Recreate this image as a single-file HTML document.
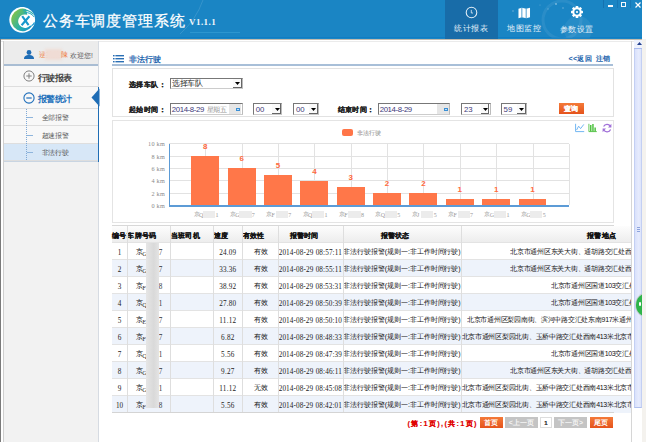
<!DOCTYPE html><html><head><meta charset="utf-8"><style>
*{margin:0;padding:0;box-sizing:border-box}
html,body{width:646px;height:442px;overflow:hidden;background:#fff;font-family:"Liberation Sans",sans-serif}
.a{position:absolute;white-space:nowrap}
</style></head><body><div class="a" style="left:0px;top:0px;width:642px;height:38.5px;background:#1a85c4"></div>
<div class="a" style="left:0px;top:37.2px;width:642px;height:1.3px;background:#0f7dc4"></div>
<div class="a" style="left:0px;top:38.5px;width:642px;height:1px;background:#c4bcae"></div>
<svg class="a" style="left:0;top:0" width="642" height="38" viewBox="0 0 642 38"><path d="M203 0Q196 20 180 34" fill="none" stroke="rgba(255,255,255,0.12)" stroke-width="1"/><path d="M190 32.5H240" stroke="rgba(120,220,255,0.25)" stroke-width="0.8"/><circle cx="562" cy="20" r="19" fill="none" stroke="rgba(255,255,255,0.07)" stroke-width="3"/><circle cx="578" cy="30" r="14" fill="rgba(255,255,255,0.06)"/><circle cx="556" cy="4" r="1" fill="rgba(255,255,255,0.4)"/><circle cx="563" cy="8" r="0.8" fill="rgba(255,255,255,0.35)"/><circle cx="548" cy="9" r="0.7" fill="rgba(255,255,255,0.3)"/><circle cx="513" cy="11" r="0.8" fill="rgba(255,255,255,0.35)"/><circle cx="540" cy="5" r="0.6" fill="rgba(255,255,255,0.3)"/></svg>
<div class="a" style="left:445px;top:0px;width:52.5px;height:38.5px;background:#186ca8"></div>
<div class="a" id="j1" style="left:42.8px;top:12px;width:142.8px;text-align:justify;text-align-last:justify;letter-spacing:0.847px;height:18px;line-height:18px;font-size:15.4px;color:#fff;-webkit-text-stroke:0.25px #fff">公务车调度管理系统</div>
<div class="a" style="left:189px;top:17.2px;height:11px;line-height:11px;font-size:9px;color:#f0f6fb;font-family:'Liberation Serif',serif;font-weight:bold;letter-spacing:0.45px">V1.1.1</div>
<svg class="a" style="left:9px;top:7px" width="27" height="27" viewBox="0 0 27 27">
<defs><linearGradient id="lg" x1="0" y1="0.2" x2="1" y2="0.9"><stop offset="0" stop-color="#8cc63f"/><stop offset="0.55" stop-color="#2bb0a6"/><stop offset="1" stop-color="#1592d0"/></linearGradient></defs>
<circle cx="13.2" cy="12.8" r="12.9" fill="#fff"/>
<path d="M17.06 2.18A11.3 11.3 0 1 0 22.9 19.3L21.2 18.57A6.8 6.8 0 1 1 18.33 7.81Z" fill="url(#lg)"/>
<path d="M14 3.2Q20 2.5 24.5 7.5" fill="none" stroke="#2ab0b0" stroke-width="1.1"/>
<path d="M15.5 5.6Q21.5 5 25.2 10" fill="none" stroke="#22a6c0" stroke-width="1"/>
<path d="M22.5 18.8Q24.5 17.5 25.5 15.5" fill="none" stroke="#1a9ad0" stroke-width="1.2"/>
<path d="M13.2 9.2L19.6 18.2M20.4 9.2L12.6 18.2" stroke="#1898cc" stroke-width="2.1" stroke-linecap="butt"/>
</svg>
<div class="a" id="j2" style="left:454.3px;top:24.2px;width:34px;text-align:justify;text-align-last:justify;letter-spacing:0.480px;height:10px;line-height:10px;font-size:8.2px;color:#e8f2fa;">统计报表</div>
<div class="a" id="j3" style="left:507.0px;top:24px;width:34px;text-align:justify;text-align-last:justify;letter-spacing:0.480px;height:10px;line-height:10px;font-size:8.2px;color:#e8f2fa;">地图监控</div>
<div class="a" id="j4" style="left:560.1px;top:24.8px;width:33.5px;text-align:justify;text-align-last:justify;letter-spacing:0.355px;height:10px;line-height:10px;font-size:8.2px;color:#e8f2fa;">参数设置</div>
<svg class="a" style="left:465px;top:5.5px" width="13" height="13" viewBox="0 0 13 13"><circle cx="6.5" cy="6.5" r="5.3" fill="none" stroke="#e6f0f8" stroke-width="1.05"/><path d="M6.3 3.9V7H8" fill="none" stroke="#e6f0f8" stroke-width="0.8"/></svg>
<svg class="a" style="left:518.3px;top:6.5px" width="12.5" height="12" viewBox="0 0 13 12"><path d="M0.5 1.5L4 0.5L8.5 1.5L12.5 0.5V10.5L8.5 11.5L4 10.5L0.5 11.5Z" fill="#fff"/><path d="M4 0.8V10.5M8.5 1.5V11.3" stroke="#1a80c3" stroke-width="0.8"/></svg>
<svg class="a" style="left:570.2px;top:5.2px" width="14" height="14" viewBox="0 0 14 14"><g transform="translate(7 7)" fill="#fff"><circle r="4.7"/><rect x="-1.3" y="-6" width="2.6" height="2.6" rx="0.6" transform="rotate(0)"/><rect x="-1.3" y="-6" width="2.6" height="2.6" rx="0.6" transform="rotate(45)"/><rect x="-1.3" y="-6" width="2.6" height="2.6" rx="0.6" transform="rotate(90)"/><rect x="-1.3" y="-6" width="2.6" height="2.6" rx="0.6" transform="rotate(135)"/><rect x="-1.3" y="-6" width="2.6" height="2.6" rx="0.6" transform="rotate(180)"/><rect x="-1.3" y="-6" width="2.6" height="2.6" rx="0.6" transform="rotate(225)"/><rect x="-1.3" y="-6" width="2.6" height="2.6" rx="0.6" transform="rotate(270)"/><rect x="-1.3" y="-6" width="2.6" height="2.6" rx="0.6" transform="rotate(315)"/><circle r="2.7" fill="#1a85c4"/><circle r="1.1" fill="#fff"/></g></svg>
<div class="a" style="left:603px;top:0px;width:0.9px;height:7.5px;background:#1572b0"></div>
<div class="a" style="left:617px;top:0px;width:0.9px;height:7.5px;background:#1677b6"></div>
<div class="a" style="left:629.5px;top:0px;width:0.9px;height:7.5px;background:#1677b6"></div>
<div class="a" style="left:608.2px;top:5.4px;width:5px;height:1.2px;background:#f4f8fc"></div>
<div class="a" style="left:621px;top:2.3px;width:5px;height:4.3px;border:1px solid #f4f8fc;border-top-width:1.6px"></div>
<svg class="a" style="left:634.8px;top:1.8px" width="6" height="6" viewBox="0 0 6 6"><path d="M0.5 0.5L5.5 5.5M5.5 0.5L0.5 5.5" stroke="#fff" stroke-width="1.2"/></svg>
<div class="a" style="left:0px;top:40.8px;width:646px;height:1.6px;background:#ebebeb"></div>
<div class="a" style="left:0px;top:38.5px;width:1.2px;height:404px;background:#7a7a7a"></div>
<div class="a" style="left:3px;top:41px;width:96px;height:401px;background:#f2f2f2;border-left:1px solid #cfcfcf;border-right:1px solid #d6dbe2"></div>
<div class="a" style="left:4px;top:41px;width:94px;height:23px;background:#ececec"></div>
<div class="a" style="left:4px;top:64px;width:94px;height:1.6px;background:#a9bdd3"></div>
<svg class="a" style="left:24px;top:49.5px" width="10" height="9" viewBox="0 0 10 9"><circle cx="5" cy="2.5" r="2.4" fill="#1f6db5"/><path d="M0 9C0 6 2 5 5 5C8 5 10 6 10 9Z" fill="#1f6db5"/></svg>
<div class="a" style="left:38.5px;top:50px;height:9px;line-height:9px;font-size:6.7px;color:#f07a3a;">逯某某</div>
<div class="a" style="left:45px;top:49px;width:17px;height:11px;background:#f0dcd5;filter:blur(1.5px)"></div>
<div class="a" style="left:60.5px;top:50px;height:9px;line-height:9px;font-size:6.7px;color:#f07a3a;">陳</div>
<div class="a" id="j5" style="left:70.2px;top:50.5px;width:22.6px;text-align:justify;text-align-last:justify;letter-spacing:-0.093px;height:9px;line-height:9px;font-size:6.8px;color:#5a5a5a;">欢迎您!</div>
<div class="a" style="left:4px;top:65.6px;width:94px;height:21px;background:#f8f8f8;border-bottom:1px solid #dedede"></div>
<svg class="a" style="left:23.25px;top:70.4px" width="12" height="12" viewBox="0 0 12 12"><circle cx="6" cy="6" r="5.1" fill="none" stroke="#808080" stroke-width="1"/><path d="M6 3.3V8.7M3.3 6H8.7" stroke="#808080" stroke-width="1"/></svg>
<div class="a" id="j6" style="left:37.7px;top:73px;width:34px;text-align:justify;text-align-last:justify;letter-spacing:-0.520px;height:10px;line-height:10px;font-size:8.6px;color:#444;font-weight:bold;-webkit-text-stroke:0">行驶报表</div>
<div class="a" style="left:4px;top:86.6px;width:94px;height:22px;background:#f8f8f8;border-bottom:1px solid #dedede"></div>
<svg class="a" style="left:23.25px;top:91.75px" width="12" height="12" viewBox="0 0 12 12"><circle cx="6" cy="6" r="5.1" fill="none" stroke="#2170bb" stroke-width="1.1"/><path d="M3.3 6H8.7" stroke="#2170bb" stroke-width="1.2"/></svg>
<div class="a" id="j7" style="left:37.7px;top:94.3px;width:34px;text-align:justify;text-align-last:justify;letter-spacing:-0.520px;height:10px;line-height:10px;font-size:8.6px;color:#2170bb;font-weight:bold;-webkit-text-stroke:0">报警统计</div>
<svg class="a" style="left:90.5px;top:87.5px" width="9" height="19" viewBox="0 0 9 19"><path d="M0.5 9.5L8.5 0.5V18.5Z" fill="#1f6db5"/></svg>
<div class="a" style="left:4px;top:108.6px;width:94px;height:17.7px;background:#f8f8f8;border-bottom:1px solid #dedede"></div>
<div class="a" style="left:27px;top:117.1px;width:6px;height:0.9px;background:#8fb5dc"></div>
<div class="a" id="j8" style="left:41.5px;top:113.1px;width:27.7px;text-align:justify;text-align-last:justify;letter-spacing:-0.095px;height:9px;line-height:9px;font-size:6.8px;color:#555;">全部报警</div>
<div class="a" style="left:4px;top:126.3px;width:94px;height:17.7px;background:#f8f8f8;border-bottom:1px solid #dedede"></div>
<div class="a" style="left:27px;top:134.8px;width:6px;height:0.9px;background:#8fb5dc"></div>
<div class="a" id="j9" style="left:41.5px;top:130.8px;width:27.7px;text-align:justify;text-align-last:justify;letter-spacing:-0.095px;height:9px;line-height:9px;font-size:6.8px;color:#555;">超速报警</div>
<div class="a" style="left:4px;top:143.6px;width:94px;height:17.7px;background:#d7e7f7;border-bottom:1px solid #dedede"></div>
<div class="a" style="left:27px;top:152.1px;width:6px;height:0.9px;background:#8fb5dc"></div>
<div class="a" id="j10" style="left:41.5px;top:148.1px;width:27.7px;text-align:justify;text-align-last:justify;letter-spacing:-0.095px;height:9px;line-height:9px;font-size:6.8px;color:#555;">非法行驶</div>
<div class="a" style="left:26.3px;top:108.6px;width:0.9px;height:52.7px;background:repeating-linear-gradient(#7fa9d6 0 1px,transparent 1px 2px)"></div>
<div class="a" style="left:98px;top:87px;width:1px;height:74.5px;background:#1f6db5"></div>
<div class="a" style="left:4px;top:160.8px;width:94px;height:1.2px;background:#c9d5e2"></div>
<svg class="a" style="left:112.5px;top:54.5px" width="11" height="8" viewBox="0 0 11 8"><g fill="#2a6fb5"><rect x="0" y="0" width="1.6" height="1.4"/><rect x="2.4" y="0" width="8.6" height="1.4"/><rect x="0" y="3" width="1.6" height="1.4"/><rect x="2.4" y="3" width="8.6" height="1.4"/><rect x="0" y="6" width="1.6" height="1.4"/><rect x="2.4" y="6" width="8.6" height="1.4"/></g></svg>
<div class="a" id="j11" style="left:128.6px;top:54.8px;width:32px;text-align:justify;text-align-last:justify;letter-spacing:-0.020px;height:9px;line-height:9px;font-size:7.8px;color:#2364ad;font-weight:bold;-webkit-text-stroke:0">非法行驶</div>
<div class="a" id="j12" style="left:568.6px;top:54.2px;width:41.8px;text-align:justify;text-align-last:justify;letter-spacing:0.156px;height:9px;line-height:9px;font-size:7.2px;color:#2364ad;font-weight:bold;-webkit-text-stroke:0">&lt;&lt;返回&nbsp;&nbsp;注销</div>
<div class="a" style="left:112px;top:64.3px;width:501px;height:1.7px;background:#a8bfd8"></div>
<div class="a" style="left:112px;top:68.3px;width:502px;height:48.4px;border:1px solid #e2e2e2"></div>
<div class="a" id="j13" style="left:129px;top:80px;width:37px;text-align:justify;text-align-last:justify;letter-spacing:0.380px;height:9px;line-height:9px;font-size:7.4px;color:#222;font-weight:bold;-webkit-text-stroke:0.15px #222">选择车队：</div>
<div class="a" style="left:170.2px;top:77.6px;width:72.6px;height:11.2px;background:#fff;border-top:1px solid #777;border-left:1px solid #777;border-right:1px solid #bbb;border-bottom:1px solid #ccc"></div>
<div class="a" id="j14" style="left:172px;top:78.6px;width:30.5px;text-align:justify;text-align-last:justify;letter-spacing:-0.395px;height:9.5px;line-height:9.5px;font-size:7.5px;color:#222;">选择车队</div>
<div class="a" style="left:232.9px;top:79.2px;width:9.2px;height:8.6px;background:#fafafa;border-right:1.2px solid #666;border-bottom:1.5px solid #666"></div>
<svg class="a" style="left:235.3px;top:82.4px" width="5" height="3" viewBox="0 0 5 3"><path d="M0 0H5L2.5 3Z" fill="#000"/></svg>
<div class="a" id="j15" style="left:129px;top:104.5px;width:37px;text-align:justify;text-align-last:justify;letter-spacing:0.380px;height:9px;line-height:9px;font-size:7.4px;color:#222;font-weight:bold;-webkit-text-stroke:0.15px #222">起始时间：</div>
<div class="a" style="left:170.2px;top:103.1px;width:72.7px;height:11.5px;background:#fff;border-top:1px solid #777;border-left:1px solid #777;border-right:1px solid #bbb;border-bottom:1px solid #ccc"></div>
<div class="a" id="j16" style="left:171.79999999999998px;top:105.0px;width:32.3px;text-align:justify;text-align-last:justify;letter-spacing:-0.381px;height:9.5px;line-height:9.5px;font-size:7.8px;color:#3e3a7a;">2014-8-29</div>
<div class="a" id="j17" style="left:206.79999999999998px;top:104.69999999999999px;width:19.5px;text-align:justify;text-align-last:justify;letter-spacing:-0.520px;height:9.5px;line-height:9.5px;font-size:7px;color:#999;">星期五</div>
<div class="a" style="left:229.2px;top:104.3px;width:11.8px;height:9.3px;background:#e6e6e6"></div>
<div class="a" style="left:236.2px;top:107.5px;width:4px;height:3.6px;border:1px solid #3b8fd4;background:#bfe0fa"></div>
<div class="a" style="left:253.1px;top:103.1px;width:29.1px;height:11.5px;background:#fff;border-top:1px solid #777;border-left:1px solid #777;border-right:1px solid #bbb;border-bottom:1px solid #ccc"></div>
<div class="a" style="left:255.7px;top:105.0px;height:9.5px;line-height:9.5px;font-size:7.8px;color:#3e3a7a;">00</div>
<div class="a" style="left:272.2px;top:104.3px;width:8.8px;height:9.3px;background:#fafafa;border-right:1.2px solid #666;border-bottom:1.5px solid #666"></div>
<svg class="a" style="left:274.59999999999997px;top:108.1px" width="5" height="3" viewBox="0 0 5 3"><path d="M0 0H5L2.5 3Z" fill="#000"/></svg>
<div class="a" style="left:293.3px;top:103.1px;width:25.5px;height:11.5px;background:#fff;border-top:1px solid #777;border-left:1px solid #777;border-right:1px solid #bbb;border-bottom:1px solid #ccc"></div>
<div class="a" style="left:295.90000000000003px;top:105.0px;height:9.5px;line-height:9.5px;font-size:7.8px;color:#3e3a7a;">00</div>
<div class="a" style="left:308.8px;top:104.3px;width:8.8px;height:9.3px;background:#fafafa;border-right:1.2px solid #666;border-bottom:1.5px solid #666"></div>
<svg class="a" style="left:311.2px;top:108.1px" width="5" height="3" viewBox="0 0 5 3"><path d="M0 0H5L2.5 3Z" fill="#000"/></svg>
<div class="a" id="j18" style="left:337.5px;top:104.5px;width:37px;text-align:justify;text-align-last:justify;letter-spacing:0.380px;height:9px;line-height:9px;font-size:7.4px;color:#222;font-weight:bold;-webkit-text-stroke:0.15px #222">结束时间：</div>
<div class="a" style="left:378.1px;top:103.1px;width:72.4px;height:11.5px;background:#fff;border-top:1px solid #777;border-left:1px solid #777;border-right:1px solid #bbb;border-bottom:1px solid #ccc"></div>
<div class="a" id="j19" style="left:379.70000000000005px;top:105.0px;width:32.3px;text-align:justify;text-align-last:justify;letter-spacing:-0.381px;height:9.5px;line-height:9.5px;font-size:7.8px;color:#3e3a7a;">2014-8-29</div>
<div class="a" style="left:437.1px;top:104.3px;width:11.8px;height:9.3px;background:#e6e6e6"></div>
<div class="a" style="left:444.1px;top:107.5px;width:4px;height:3.6px;border:1px solid #3b8fd4;background:#bfe0fa"></div>
<div class="a" style="left:461.3px;top:103.1px;width:29.4px;height:11.5px;background:#fff;border-top:1px solid #777;border-left:1px solid #777;border-right:1px solid #bbb;border-bottom:1px solid #ccc"></div>
<div class="a" style="left:463.90000000000003px;top:105.0px;height:9.5px;line-height:9.5px;font-size:7.8px;color:#3e3a7a;">23</div>
<div class="a" style="left:480.7px;top:104.3px;width:8.8px;height:9.3px;background:#fafafa;border-right:1.2px solid #666;border-bottom:1.5px solid #666"></div>
<svg class="a" style="left:483.09999999999997px;top:108.1px" width="5" height="3" viewBox="0 0 5 3"><path d="M0 0H5L2.5 3Z" fill="#000"/></svg>
<div class="a" style="left:501px;top:103.1px;width:26px;height:11.5px;background:#fff;border-top:1px solid #777;border-left:1px solid #777;border-right:1px solid #bbb;border-bottom:1px solid #ccc"></div>
<div class="a" style="left:503.6px;top:105.0px;height:9.5px;line-height:9.5px;font-size:7.8px;color:#3e3a7a;">59</div>
<div class="a" style="left:517px;top:104.3px;width:8.8px;height:9.3px;background:#fafafa;border-right:1.2px solid #666;border-bottom:1.5px solid #666"></div>
<svg class="a" style="left:519.4px;top:108.1px" width="5" height="3" viewBox="0 0 5 3"><path d="M0 0H5L2.5 3Z" fill="#000"/></svg>
<div class="a" style="left:558.5px;top:102.8px;width:25.5px;height:11px;background:linear-gradient(#f47a38,#e5531c)"></div>
<div class="a" style="left:563.5px;top:103.8px;height:9px;line-height:9px;font-size:7.4px;color:#fff;font-weight:bold;-webkit-text-stroke:0.15px #fff">查询</div>
<div class="a" style="left:112px;top:120px;width:502px;height:102.5px;border:1px solid #e4e4e4"></div>
<div class="a" style="left:342.3px;top:128.9px;width:11px;height:6.8px;background:#ff7548;border-radius:2px"></div>
<div class="a" id="j20" style="left:357px;top:127.5px;width:24.5px;text-align:justify;text-align-last:justify;letter-spacing:0.105px;height:9px;line-height:9px;font-size:6.1px;color:#888;">非法行驶</div>
<svg class="a" style="left:570px;top:120px" width="44" height="15" viewBox="570 120 44 15"><path d="M575.6 123.8V131.6H584.2" fill="none" stroke="#62aef0" stroke-width="0.9"/><path d="M576.6 130L578.6 126.2L580.6 128.6L583.8 124.4" fill="none" stroke="#62aef0" stroke-width="0.9"/><path d="M588.9 123.8V131.6H596.8" fill="none" stroke="#52c244" stroke-width="0.9"/><rect x="590" y="125" width="1.5" height="6.6" fill="#52c244"/><rect x="592.2" y="124" width="1.5" height="7.6" fill="#52c244"/><rect x="594.4" y="127.5" width="1.5" height="4.1" fill="#52c244"/><path d="M603.6 126.6A3.9 3.9 0 0 1 610.4 126.2M610.6 129.4A3.9 3.9 0 0 1 603.6 129.8" fill="none" stroke="#a070d8" stroke-width="1.2"/><path d="M611.4 123.8V127.4H608Z" fill="#a070d8"/><path d="M602.6 132.2V128.6H606Z" fill="#a070d8"/></svg>
<div class="a" style="left:169.2px;top:143.4px;width:400.2px;height:0.8px;background:#e2e2e2"></div>
<div class="a" style="left:169.2px;top:155.72px;width:400.2px;height:0.8px;background:#e2e2e2"></div>
<div class="a" style="left:169.2px;top:168.04px;width:400.2px;height:0.8px;background:#e2e2e2"></div>
<div class="a" style="left:169.2px;top:180.35999999999999px;width:400.2px;height:0.8px;background:#e2e2e2"></div>
<div class="a" style="left:169.2px;top:192.68px;width:400.2px;height:0.8px;background:#e2e2e2"></div>
<div class="a" style="left:205.18181818181816px;top:143.8px;width:0.8px;height:61.599999999999994px;background:#e2e2e2"></div>
<div class="a" style="left:241.56363636363633px;top:143.8px;width:0.8px;height:61.599999999999994px;background:#e2e2e2"></div>
<div class="a" style="left:277.9454545454546px;top:143.8px;width:0.8px;height:61.599999999999994px;background:#e2e2e2"></div>
<div class="a" style="left:314.32727272727277px;top:143.8px;width:0.8px;height:61.599999999999994px;background:#e2e2e2"></div>
<div class="a" style="left:350.70909090909095px;top:143.8px;width:0.8px;height:61.599999999999994px;background:#e2e2e2"></div>
<div class="a" style="left:387.0909090909091px;top:143.8px;width:0.8px;height:61.599999999999994px;background:#e2e2e2"></div>
<div class="a" style="left:423.4727272727273px;top:143.8px;width:0.8px;height:61.599999999999994px;background:#e2e2e2"></div>
<div class="a" style="left:459.8545454545455px;top:143.8px;width:0.8px;height:61.599999999999994px;background:#e2e2e2"></div>
<div class="a" style="left:496.23636363636365px;top:143.8px;width:0.8px;height:61.599999999999994px;background:#e2e2e2"></div>
<div class="a" style="left:532.6181818181818px;top:143.8px;width:0.8px;height:61.599999999999994px;background:#e2e2e2"></div>
<div class="a" style="left:569.0px;top:143.8px;width:0.8px;height:61.599999999999994px;background:#e2e2e2"></div>
<div class="a" style="left:120px;width:45px;text-align:right;top:139.3px;height:9px;line-height:9px;font-size:6.2px;color:#8a8a8a;letter-spacing:0.25px;font-family:'Liberation Serif',serif">10 km</div>
<div class="a" style="left:120px;width:45px;text-align:right;top:151.62px;height:9px;line-height:9px;font-size:6.2px;color:#8a8a8a;letter-spacing:0.25px;font-family:'Liberation Serif',serif">8 km</div>
<div class="a" style="left:120px;width:45px;text-align:right;top:163.94px;height:9px;line-height:9px;font-size:6.2px;color:#8a8a8a;letter-spacing:0.25px;font-family:'Liberation Serif',serif">6 km</div>
<div class="a" style="left:120px;width:45px;text-align:right;top:176.26px;height:9px;line-height:9px;font-size:6.2px;color:#8a8a8a;letter-spacing:0.25px;font-family:'Liberation Serif',serif">4 km</div>
<div class="a" style="left:120px;width:45px;text-align:right;top:188.58px;height:9px;line-height:9px;font-size:6.2px;color:#8a8a8a;letter-spacing:0.25px;font-family:'Liberation Serif',serif">2 km</div>
<div class="a" style="left:120px;width:45px;text-align:right;top:200.9px;height:9px;line-height:9px;font-size:6.2px;color:#8a8a8a;letter-spacing:0.25px;font-family:'Liberation Serif',serif">0 km</div>
<div class="a" style="left:191.3px;top:156.12px;width:27.9px;height:49.279999999999994px;background:#ff7749"></div>
<div class="a" style="left:195.3px;width:20px;text-align:center;top:142.12px;height:10px;line-height:10px;font-size:8px;font-weight:bold;color:#ff6a3d">8</div>
<div class="a" style="left:193.5px;top:210px;height:9px;line-height:9px;font-size:6px;color:#999;">京</div>
<div class="a" style="left:198.9px;top:211px;height:9px;line-height:9px;font-size:6px;color:#999;font-family:'Liberation Serif',serif">Q</div>
<div class="a" style="left:215.5px;top:211px;height:9px;line-height:9px;font-size:6px;color:#999;font-family:'Liberation Serif',serif">1</div>
<div class="a" style="left:203.0px;top:210.8px;width:12.2px;height:7.2px;background:#ececec;filter:blur(0.5px)"></div>
<div class="a" style="left:227.66000000000003px;top:168.44px;width:27.9px;height:36.959999999999994px;background:#ff7749"></div>
<div class="a" style="left:231.66000000000003px;width:20px;text-align:center;top:154.44px;height:10px;line-height:10px;font-size:8px;font-weight:bold;color:#ff6a3d">6</div>
<div class="a" style="left:229.86px;top:210px;height:9px;line-height:9px;font-size:6px;color:#999;">京</div>
<div class="a" style="left:235.26000000000002px;top:211px;height:9px;line-height:9px;font-size:6px;color:#999;font-family:'Liberation Serif',serif">G</div>
<div class="a" style="left:251.86px;top:211px;height:9px;line-height:9px;font-size:6px;color:#999;font-family:'Liberation Serif',serif">7</div>
<div class="a" style="left:239.36px;top:210.8px;width:12.2px;height:7.2px;background:#ececec;filter:blur(0.5px)"></div>
<div class="a" style="left:264.02px;top:174.60000000000002px;width:27.9px;height:30.799999999999997px;background:#ff7749"></div>
<div class="a" style="left:268.02px;width:20px;text-align:center;top:160.60000000000002px;height:10px;line-height:10px;font-size:8px;font-weight:bold;color:#ff6a3d">5</div>
<div class="a" style="left:266.21999999999997px;top:210px;height:9px;line-height:9px;font-size:6px;color:#999;">京</div>
<div class="a" style="left:271.62px;top:211px;height:9px;line-height:9px;font-size:6px;color:#999;font-family:'Liberation Serif',serif">F</div>
<div class="a" style="left:288.21999999999997px;top:211px;height:9px;line-height:9px;font-size:6px;color:#999;font-family:'Liberation Serif',serif">7</div>
<div class="a" style="left:275.71999999999997px;top:210.8px;width:12.2px;height:7.2px;background:#ececec;filter:blur(0.5px)"></div>
<div class="a" style="left:300.38px;top:180.76000000000002px;width:27.9px;height:24.639999999999997px;background:#ff7749"></div>
<div class="a" style="left:304.38px;width:20px;text-align:center;top:166.76000000000002px;height:10px;line-height:10px;font-size:8px;font-weight:bold;color:#ff6a3d">4</div>
<div class="a" style="left:302.58px;top:210px;height:9px;line-height:9px;font-size:6px;color:#999;">京</div>
<div class="a" style="left:307.98px;top:211px;height:9px;line-height:9px;font-size:6px;color:#999;font-family:'Liberation Serif',serif">Q</div>
<div class="a" style="left:324.58px;top:211px;height:9px;line-height:9px;font-size:6px;color:#999;font-family:'Liberation Serif',serif">1</div>
<div class="a" style="left:312.08px;top:210.8px;width:12.2px;height:7.2px;background:#ececec;filter:blur(0.5px)"></div>
<div class="a" style="left:336.74px;top:186.92000000000002px;width:27.9px;height:18.479999999999997px;background:#ff7749"></div>
<div class="a" style="left:340.74px;width:20px;text-align:center;top:172.92000000000002px;height:10px;line-height:10px;font-size:8px;font-weight:bold;color:#ff6a3d">3</div>
<div class="a" style="left:338.94px;top:210px;height:9px;line-height:9px;font-size:6px;color:#999;">京</div>
<div class="a" style="left:344.34000000000003px;top:211px;height:9px;line-height:9px;font-size:6px;color:#999;font-family:'Liberation Serif',serif">F</div>
<div class="a" style="left:360.94px;top:211px;height:9px;line-height:9px;font-size:6px;color:#999;font-family:'Liberation Serif',serif">8</div>
<div class="a" style="left:348.44px;top:210.8px;width:12.2px;height:7.2px;background:#ececec;filter:blur(0.5px)"></div>
<div class="a" style="left:373.1px;top:193.08px;width:27.9px;height:12.319999999999999px;background:#ff7749"></div>
<div class="a" style="left:377.1px;width:20px;text-align:center;top:179.08px;height:10px;line-height:10px;font-size:8px;font-weight:bold;color:#ff6a3d">2</div>
<div class="a" style="left:375.3px;top:210px;height:9px;line-height:9px;font-size:6px;color:#999;">京</div>
<div class="a" style="left:380.70000000000005px;top:211px;height:9px;line-height:9px;font-size:6px;color:#999;font-family:'Liberation Serif',serif">Q</div>
<div class="a" style="left:397.3px;top:211px;height:9px;line-height:9px;font-size:6px;color:#999;font-family:'Liberation Serif',serif">5</div>
<div class="a" style="left:384.8px;top:210.8px;width:12.2px;height:7.2px;background:#ececec;filter:blur(0.5px)"></div>
<div class="a" style="left:409.46000000000004px;top:193.08px;width:27.9px;height:12.319999999999999px;background:#ff7749"></div>
<div class="a" style="left:413.46000000000004px;width:20px;text-align:center;top:179.08px;height:10px;line-height:10px;font-size:8px;font-weight:bold;color:#ff6a3d">2</div>
<div class="a" style="left:411.66px;top:210px;height:9px;line-height:9px;font-size:6px;color:#999;">京</div>
<div class="a" style="left:417.06000000000006px;top:211px;height:9px;line-height:9px;font-size:6px;color:#999;font-family:'Liberation Serif',serif">J</div>
<div class="a" style="left:433.66px;top:211px;height:9px;line-height:9px;font-size:6px;color:#999;font-family:'Liberation Serif',serif">5</div>
<div class="a" style="left:421.16px;top:210.8px;width:12.2px;height:7.2px;background:#ececec;filter:blur(0.5px)"></div>
<div class="a" style="left:445.82px;top:199.24px;width:27.9px;height:6.159999999999999px;background:#ff7749"></div>
<div class="a" style="left:449.82px;width:20px;text-align:center;top:185.24px;height:10px;line-height:10px;font-size:8px;font-weight:bold;color:#ff6a3d">1</div>
<div class="a" style="left:448.02px;top:210px;height:9px;line-height:9px;font-size:6px;color:#999;">京</div>
<div class="a" style="left:453.42px;top:211px;height:9px;line-height:9px;font-size:6px;color:#999;font-family:'Liberation Serif',serif">F</div>
<div class="a" style="left:470.02px;top:211px;height:9px;line-height:9px;font-size:6px;color:#999;font-family:'Liberation Serif',serif">7</div>
<div class="a" style="left:457.52px;top:210.8px;width:12.2px;height:7.2px;background:#ececec;filter:blur(0.5px)"></div>
<div class="a" style="left:482.18px;top:199.24px;width:27.9px;height:6.159999999999999px;background:#ff7749"></div>
<div class="a" style="left:486.18px;width:20px;text-align:center;top:185.24px;height:10px;line-height:10px;font-size:8px;font-weight:bold;color:#ff6a3d">1</div>
<div class="a" style="left:484.38px;top:210px;height:9px;line-height:9px;font-size:6px;color:#999;">京</div>
<div class="a" style="left:489.78000000000003px;top:211px;height:9px;line-height:9px;font-size:6px;color:#999;font-family:'Liberation Serif',serif">G</div>
<div class="a" style="left:506.38px;top:211px;height:9px;line-height:9px;font-size:6px;color:#999;font-family:'Liberation Serif',serif">1</div>
<div class="a" style="left:493.88px;top:210.8px;width:12.2px;height:7.2px;background:#ececec;filter:blur(0.5px)"></div>
<div class="a" style="left:518.54px;top:199.24px;width:27.9px;height:6.159999999999999px;background:#ff7749"></div>
<div class="a" style="left:522.54px;width:20px;text-align:center;top:185.24px;height:10px;line-height:10px;font-size:8px;font-weight:bold;color:#ff6a3d">1</div>
<div class="a" style="left:520.74px;top:210px;height:9px;line-height:9px;font-size:6px;color:#999;">京</div>
<div class="a" style="left:526.14px;top:211px;height:9px;line-height:9px;font-size:6px;color:#999;font-family:'Liberation Serif',serif">G</div>
<div class="a" style="left:542.74px;top:211px;height:9px;line-height:9px;font-size:6px;color:#999;font-family:'Liberation Serif',serif">5</div>
<div class="a" style="left:530.24px;top:210.8px;width:12.2px;height:7.2px;background:#ececec;filter:blur(0.5px)"></div>
<div class="a" style="left:168.5px;top:143.8px;width:1.6px;height:62.599999999999994px;background:#5c9bd6"></div>
<div class="a" style="left:169.2px;top:205.0px;width:400.2px;height:1.5px;background:#5c9bd6"></div>
<div class="a" style="left:112.3px;top:225.5px;width:519.7px;height:187px;border-left:1px solid #dcdcdc"></div>
<div class="a" style="left:112.3px;top:225.5px;width:519.7px;height:17px;background:linear-gradient(#fdfdfd,#ececec)"></div>
<div class="a" id="j21" style="left:112.3px;top:230.5px;width:14px;text-align:justify;text-align-last:justify;letter-spacing:-0.020px;height:9px;line-height:9px;font-size:6.9px;color:#111;font-weight:bold;-webkit-text-stroke:0.15px #111">编号</div>
<div class="a" id="j22" style="left:127.3px;top:230.5px;width:29px;text-align:justify;text-align-last:justify;letter-spacing:0.230px;height:9px;line-height:9px;font-size:6.9px;color:#111;font-weight:bold;-webkit-text-stroke:0.15px #111">车牌号码</div>
<div class="a" id="j23" style="left:171.1px;top:230.5px;width:28.7px;text-align:justify;text-align-last:justify;letter-spacing:0.155px;height:9px;line-height:9px;font-size:6.9px;color:#111;font-weight:bold;-webkit-text-stroke:0.15px #111">当班司机</div>
<div class="a" id="j24" style="left:214.1px;top:230.5px;width:14.5px;text-align:justify;text-align-last:justify;letter-spacing:0.230px;height:9px;line-height:9px;font-size:6.9px;color:#111;font-weight:bold;-webkit-text-stroke:0.15px #111">速度</div>
<div class="a" id="j25" style="left:243px;top:230.5px;width:20.9px;text-align:justify;text-align-last:justify;letter-spacing:-0.053px;height:9px;line-height:9px;font-size:6.9px;color:#111;font-weight:bold;-webkit-text-stroke:0.15px #111">有效性</div>
<div class="a" id="j26" style="left:289.6px;top:230.5px;width:28.2px;text-align:justify;text-align-last:justify;letter-spacing:0.030px;height:9px;line-height:9px;font-size:6.9px;color:#111;font-weight:bold;-webkit-text-stroke:0.15px #111">报警时间</div>
<div class="a" id="j27" style="left:381.4px;top:230.5px;width:28px;text-align:justify;text-align-last:justify;letter-spacing:-0.020px;height:9px;line-height:9px;font-size:6.9px;color:#111;font-weight:bold;-webkit-text-stroke:0.15px #111">报警状态</div>
<div class="a" id="j28" style="left:587.3px;top:230.5px;width:28.6px;text-align:justify;text-align-last:justify;letter-spacing:0.130px;height:9px;line-height:9px;font-size:6.9px;color:#111;font-weight:bold;-webkit-text-stroke:0.15px #111">报警地点</div>
<div class="a" style="left:112.3px;top:242.5px;width:519.7px;height:17px;background:#fff"></div>
<div class="a" style="left:89.6px;width:60px;text-align:center;top:249.1px;height:9px;line-height:9px;font-size:7.2px;color:#333;font-family:'Liberation Serif',serif;color:#222">1</div>
<div class="a" style="left:135.6px;top:246.5px;height:9px;line-height:9px;font-size:7px;color:#111;">京</div>
<div class="a" style="left:142.3px;top:249.1px;height:9px;line-height:9px;font-size:6.6px;color:#333;font-family:'Liberation Serif',serif">G</div>
<div class="a" style="left:158.8px;top:249.1px;height:9px;line-height:9px;font-size:7.2px;color:#333;font-family:'Liberation Serif',serif">7</div>
<div class="a" style="left:197.8px;width:60px;text-align:center;top:249.1px;height:9px;line-height:9px;font-size:7.2px;color:#333;font-family:'Liberation Serif',serif;letter-spacing:0.2px;color:#222">24.09</div>
<div class="a" id="j29" style="left:254px;top:246.5px;width:13.6px;text-align:justify;text-align-last:justify;letter-spacing:-0.220px;height:9px;line-height:9px;font-size:7px;color:#111;">有效</div>
<div class="a" id="j30" style="left:278.7px;top:249.1px;width:63.2px;text-align:justify;text-align-last:justify;letter-spacing:0.116px;height:9px;line-height:9px;font-size:7.2px;color:#222;font-family:'Liberation Serif',serif">2014-08-29 08:57:11</div>
<div class="a" id="j31" style="left:343.2px;top:246.5px;width:117.4px;text-align:justify;text-align-last:justify;letter-spacing:-0.084px;height:9px;line-height:9px;font-size:7px;color:#111;">非法行驶报警(规则一:非工作时间行驶)</div>
<div class="a" style="left:510px;width:122px;overflow:hidden;top:246.5px;height:9px">
<div class="a" id="j32" style="left:0px;top:0px;width:128.4px;text-align:justify;text-align-last:justify;letter-spacing:-0.262px;height:9px;line-height:9px;font-size:7px;color:#111;">北京市通州区东关大街、通胡路交汇处西南</div>
</div>
<div class="a" style="left:112.3px;top:242.0px;width:519.7px;height:1px;background:#e3e3e3"></div>
<div class="a" style="left:112.3px;top:259.5px;width:519.7px;height:17px;background:#eef3fb"></div>
<div class="a" style="left:89.6px;width:60px;text-align:center;top:266.1px;height:9px;line-height:9px;font-size:7.2px;color:#333;font-family:'Liberation Serif',serif;color:#222">2</div>
<div class="a" style="left:135.6px;top:263.5px;height:9px;line-height:9px;font-size:7px;color:#111;">京</div>
<div class="a" style="left:142.3px;top:266.1px;height:9px;line-height:9px;font-size:6.6px;color:#333;font-family:'Liberation Serif',serif">G</div>
<div class="a" style="left:158.8px;top:266.1px;height:9px;line-height:9px;font-size:7.2px;color:#333;font-family:'Liberation Serif',serif">7</div>
<div class="a" style="left:197.8px;width:60px;text-align:center;top:266.1px;height:9px;line-height:9px;font-size:7.2px;color:#333;font-family:'Liberation Serif',serif;letter-spacing:0.2px;color:#222">33.36</div>
<div class="a" id="j33" style="left:254px;top:263.5px;width:13.6px;text-align:justify;text-align-last:justify;letter-spacing:-0.220px;height:9px;line-height:9px;font-size:7px;color:#111;">有效</div>
<div class="a" id="j34" style="left:278.7px;top:266.1px;width:63.2px;text-align:justify;text-align-last:justify;letter-spacing:0.116px;height:9px;line-height:9px;font-size:7.2px;color:#222;font-family:'Liberation Serif',serif">2014-08-29 08:55:11</div>
<div class="a" id="j35" style="left:343.2px;top:263.5px;width:117.4px;text-align:justify;text-align-last:justify;letter-spacing:-0.084px;height:9px;line-height:9px;font-size:7px;color:#111;">非法行驶报警(规则一:非工作时间行驶)</div>
<div class="a" style="left:510px;width:122px;overflow:hidden;top:263.5px;height:9px">
<div class="a" id="j36" style="left:0px;top:0px;width:128.4px;text-align:justify;text-align-last:justify;letter-spacing:-0.262px;height:9px;line-height:9px;font-size:7px;color:#111;">北京市通州区东关大街、通胡路交汇处西南</div>
</div>
<div class="a" style="left:112.3px;top:259.0px;width:519.7px;height:1px;background:#e3e3e3"></div>
<div class="a" style="left:112.3px;top:276.5px;width:519.7px;height:17px;background:#fff"></div>
<div class="a" style="left:89.6px;width:60px;text-align:center;top:283.1px;height:9px;line-height:9px;font-size:7.2px;color:#333;font-family:'Liberation Serif',serif;color:#222">3</div>
<div class="a" style="left:135.6px;top:280.5px;height:9px;line-height:9px;font-size:7px;color:#111;">京</div>
<div class="a" style="left:142.3px;top:283.1px;height:9px;line-height:9px;font-size:6.6px;color:#333;font-family:'Liberation Serif',serif">F</div>
<div class="a" style="left:158.8px;top:283.1px;height:9px;line-height:9px;font-size:7.2px;color:#333;font-family:'Liberation Serif',serif">8</div>
<div class="a" style="left:197.8px;width:60px;text-align:center;top:283.1px;height:9px;line-height:9px;font-size:7.2px;color:#333;font-family:'Liberation Serif',serif;letter-spacing:0.2px;color:#222">38.92</div>
<div class="a" id="j37" style="left:254px;top:280.5px;width:13.6px;text-align:justify;text-align-last:justify;letter-spacing:-0.220px;height:9px;line-height:9px;font-size:7px;color:#111;">有效</div>
<div class="a" id="j38" style="left:278.7px;top:283.1px;width:63.2px;text-align:justify;text-align-last:justify;letter-spacing:0.102px;height:9px;line-height:9px;font-size:7.2px;color:#222;font-family:'Liberation Serif',serif">2014-08-29 08:53:31</div>
<div class="a" id="j39" style="left:343.2px;top:280.5px;width:117.4px;text-align:justify;text-align-last:justify;letter-spacing:-0.084px;height:9px;line-height:9px;font-size:7px;color:#111;">非法行驶报警(规则一:非工作时间行驶)</div>
<div class="a" style="left:551px;width:81px;overflow:hidden;top:280.5px;height:9px">
<div class="a" id="j40" style="left:0px;top:0px;width:84.5px;text-align:justify;text-align-last:justify;letter-spacing:-0.319px;height:9px;line-height:9px;font-size:7px;color:#111;">北京市通州区国道103交汇处</div>
</div>
<div class="a" style="left:112.3px;top:276.0px;width:519.7px;height:1px;background:#e3e3e3"></div>
<div class="a" style="left:112.3px;top:293.5px;width:519.7px;height:17px;background:#eef3fb"></div>
<div class="a" style="left:89.6px;width:60px;text-align:center;top:300.1px;height:9px;line-height:9px;font-size:7.2px;color:#333;font-family:'Liberation Serif',serif;color:#222">4</div>
<div class="a" style="left:135.6px;top:297.5px;height:9px;line-height:9px;font-size:7px;color:#111;">京</div>
<div class="a" style="left:142.3px;top:300.1px;height:9px;line-height:9px;font-size:6.6px;color:#333;font-family:'Liberation Serif',serif">Q</div>
<div class="a" style="left:158.8px;top:300.1px;height:9px;line-height:9px;font-size:7.2px;color:#333;font-family:'Liberation Serif',serif">1</div>
<div class="a" style="left:197.8px;width:60px;text-align:center;top:300.1px;height:9px;line-height:9px;font-size:7.2px;color:#333;font-family:'Liberation Serif',serif;letter-spacing:0.2px;color:#222">27.80</div>
<div class="a" id="j41" style="left:254px;top:297.5px;width:13.6px;text-align:justify;text-align-last:justify;letter-spacing:-0.220px;height:9px;line-height:9px;font-size:7px;color:#111;">有效</div>
<div class="a" id="j42" style="left:278.7px;top:300.1px;width:63.2px;text-align:justify;text-align-last:justify;letter-spacing:0.102px;height:9px;line-height:9px;font-size:7.2px;color:#222;font-family:'Liberation Serif',serif">2014-08-29 08:50:39</div>
<div class="a" id="j43" style="left:343.2px;top:297.5px;width:117.4px;text-align:justify;text-align-last:justify;letter-spacing:-0.084px;height:9px;line-height:9px;font-size:7px;color:#111;">非法行驶报警(规则一:非工作时间行驶)</div>
<div class="a" style="left:551px;width:81px;overflow:hidden;top:297.5px;height:9px">
<div class="a" id="j44" style="left:0px;top:0px;width:84.5px;text-align:justify;text-align-last:justify;letter-spacing:-0.319px;height:9px;line-height:9px;font-size:7px;color:#111;">北京市通州区国道103交汇处</div>
</div>
<div class="a" style="left:112.3px;top:293.0px;width:519.7px;height:1px;background:#e3e3e3"></div>
<div class="a" style="left:112.3px;top:310.5px;width:519.7px;height:17px;background:#fff"></div>
<div class="a" style="left:89.6px;width:60px;text-align:center;top:317.1px;height:9px;line-height:9px;font-size:7.2px;color:#333;font-family:'Liberation Serif',serif;color:#222">5</div>
<div class="a" style="left:135.6px;top:314.5px;height:9px;line-height:9px;font-size:7px;color:#111;">京</div>
<div class="a" style="left:142.3px;top:317.1px;height:9px;line-height:9px;font-size:6.6px;color:#333;font-family:'Liberation Serif',serif">E</div>
<div class="a" style="left:158.8px;top:317.1px;height:9px;line-height:9px;font-size:7.2px;color:#333;font-family:'Liberation Serif',serif">7</div>
<div class="a" style="left:197.8px;width:60px;text-align:center;top:317.1px;height:9px;line-height:9px;font-size:7.2px;color:#333;font-family:'Liberation Serif',serif;letter-spacing:0.2px;color:#222">11.12</div>
<div class="a" id="j45" style="left:254px;top:314.5px;width:13.6px;text-align:justify;text-align-last:justify;letter-spacing:-0.220px;height:9px;line-height:9px;font-size:7px;color:#111;">有效</div>
<div class="a" id="j46" style="left:278.7px;top:317.1px;width:63.2px;text-align:justify;text-align-last:justify;letter-spacing:0.102px;height:9px;line-height:9px;font-size:7.2px;color:#222;font-family:'Liberation Serif',serif">2014-08-29 08:50:10</div>
<div class="a" id="j47" style="left:343.2px;top:314.5px;width:117.4px;text-align:justify;text-align-last:justify;letter-spacing:-0.084px;height:9px;line-height:9px;font-size:7px;color:#111;">非法行驶报警(规则一:非工作时间行驶)</div>
<div class="a" style="left:467px;width:165px;overflow:hidden;top:314.5px;height:9px">
<div class="a" id="j48" style="left:0px;top:0px;width:165.6px;text-align:justify;text-align-last:justify;letter-spacing:-0.293px;height:9px;line-height:9px;font-size:7px;color:#111;">北京市通州区梨园南街、滨河中路交汇处东南917米通州</div>
</div>
<div class="a" style="left:112.3px;top:310.0px;width:519.7px;height:1px;background:#e3e3e3"></div>
<div class="a" style="left:112.3px;top:327.5px;width:519.7px;height:17px;background:#eef3fb"></div>
<div class="a" style="left:89.6px;width:60px;text-align:center;top:334.1px;height:9px;line-height:9px;font-size:7.2px;color:#333;font-family:'Liberation Serif',serif;color:#222">6</div>
<div class="a" style="left:135.6px;top:331.5px;height:9px;line-height:9px;font-size:7px;color:#111;">京</div>
<div class="a" style="left:142.3px;top:334.1px;height:9px;line-height:9px;font-size:6.6px;color:#333;font-family:'Liberation Serif',serif">F</div>
<div class="a" style="left:158.8px;top:334.1px;height:9px;line-height:9px;font-size:7.2px;color:#333;font-family:'Liberation Serif',serif">7</div>
<div class="a" style="left:197.8px;width:60px;text-align:center;top:334.1px;height:9px;line-height:9px;font-size:7.2px;color:#333;font-family:'Liberation Serif',serif;letter-spacing:0.2px;color:#222">6.82</div>
<div class="a" id="j49" style="left:254px;top:331.5px;width:13.6px;text-align:justify;text-align-last:justify;letter-spacing:-0.220px;height:9px;line-height:9px;font-size:7px;color:#111;">有效</div>
<div class="a" id="j50" style="left:278.7px;top:334.1px;width:63.2px;text-align:justify;text-align-last:justify;letter-spacing:0.102px;height:9px;line-height:9px;font-size:7.2px;color:#222;font-family:'Liberation Serif',serif">2014-08-29 08:48:33</div>
<div class="a" id="j51" style="left:343.2px;top:331.5px;width:117.4px;text-align:justify;text-align-last:justify;letter-spacing:-0.084px;height:9px;line-height:9px;font-size:7px;color:#111;">非法行驶报警(规则一:非工作时间行驶)</div>
<div class="a" style="left:461.5px;width:170.5px;overflow:hidden;top:331.5px;height:9px">
<div class="a" id="j52" style="left:0px;top:0px;width:172.4px;text-align:justify;text-align-last:justify;letter-spacing:-0.290px;height:9px;line-height:9px;font-size:7px;color:#111;">北京市通州区梨园北街、玉桥中路交汇处西南413米北京市</div>
</div>
<div class="a" style="left:112.3px;top:327.0px;width:519.7px;height:1px;background:#e3e3e3"></div>
<div class="a" style="left:112.3px;top:344.5px;width:519.7px;height:17px;background:#fff"></div>
<div class="a" style="left:89.6px;width:60px;text-align:center;top:351.1px;height:9px;line-height:9px;font-size:7.2px;color:#333;font-family:'Liberation Serif',serif;color:#222">7</div>
<div class="a" style="left:135.6px;top:348.5px;height:9px;line-height:9px;font-size:7px;color:#111;">京</div>
<div class="a" style="left:142.3px;top:351.1px;height:9px;line-height:9px;font-size:6.6px;color:#333;font-family:'Liberation Serif',serif">Q</div>
<div class="a" style="left:158.8px;top:351.1px;height:9px;line-height:9px;font-size:7.2px;color:#333;font-family:'Liberation Serif',serif">1</div>
<div class="a" style="left:197.8px;width:60px;text-align:center;top:351.1px;height:9px;line-height:9px;font-size:7.2px;color:#333;font-family:'Liberation Serif',serif;letter-spacing:0.2px;color:#222">5.56</div>
<div class="a" id="j53" style="left:254px;top:348.5px;width:13.6px;text-align:justify;text-align-last:justify;letter-spacing:-0.220px;height:9px;line-height:9px;font-size:7px;color:#111;">有效</div>
<div class="a" id="j54" style="left:278.7px;top:351.1px;width:63.2px;text-align:justify;text-align-last:justify;letter-spacing:0.102px;height:9px;line-height:9px;font-size:7.2px;color:#222;font-family:'Liberation Serif',serif">2014-08-29 08:47:39</div>
<div class="a" id="j55" style="left:343.2px;top:348.5px;width:117.4px;text-align:justify;text-align-last:justify;letter-spacing:-0.084px;height:9px;line-height:9px;font-size:7px;color:#111;">非法行驶报警(规则一:非工作时间行驶)</div>
<div class="a" style="left:551px;width:81px;overflow:hidden;top:348.5px;height:9px">
<div class="a" id="j56" style="left:0px;top:0px;width:84.5px;text-align:justify;text-align-last:justify;letter-spacing:-0.319px;height:9px;line-height:9px;font-size:7px;color:#111;">北京市通州区国道103交汇处</div>
</div>
<div class="a" style="left:112.3px;top:344.0px;width:519.7px;height:1px;background:#e3e3e3"></div>
<div class="a" style="left:112.3px;top:361.5px;width:519.7px;height:17px;background:#eef3fb"></div>
<div class="a" style="left:89.6px;width:60px;text-align:center;top:368.1px;height:9px;line-height:9px;font-size:7.2px;color:#333;font-family:'Liberation Serif',serif;color:#222">8</div>
<div class="a" style="left:135.6px;top:365.5px;height:9px;line-height:9px;font-size:7px;color:#111;">京</div>
<div class="a" style="left:142.3px;top:368.1px;height:9px;line-height:9px;font-size:6.6px;color:#333;font-family:'Liberation Serif',serif">G</div>
<div class="a" style="left:158.8px;top:368.1px;height:9px;line-height:9px;font-size:7.2px;color:#333;font-family:'Liberation Serif',serif">7</div>
<div class="a" style="left:197.8px;width:60px;text-align:center;top:368.1px;height:9px;line-height:9px;font-size:7.2px;color:#333;font-family:'Liberation Serif',serif;letter-spacing:0.2px;color:#222">9.27</div>
<div class="a" id="j57" style="left:254px;top:365.5px;width:13.6px;text-align:justify;text-align-last:justify;letter-spacing:-0.220px;height:9px;line-height:9px;font-size:7px;color:#111;">有效</div>
<div class="a" id="j58" style="left:278.7px;top:368.1px;width:63.2px;text-align:justify;text-align-last:justify;letter-spacing:0.116px;height:9px;line-height:9px;font-size:7.2px;color:#222;font-family:'Liberation Serif',serif">2014-08-29 08:46:11</div>
<div class="a" id="j59" style="left:343.2px;top:365.5px;width:117.4px;text-align:justify;text-align-last:justify;letter-spacing:-0.084px;height:9px;line-height:9px;font-size:7px;color:#111;">非法行驶报警(规则一:非工作时间行驶)</div>
<div class="a" style="left:510px;width:122px;overflow:hidden;top:365.5px;height:9px">
<div class="a" id="j60" style="left:0px;top:0px;width:128.4px;text-align:justify;text-align-last:justify;letter-spacing:-0.262px;height:9px;line-height:9px;font-size:7px;color:#111;">北京市通州区东关大街、通胡路交汇处西南</div>
</div>
<div class="a" style="left:112.3px;top:361.0px;width:519.7px;height:1px;background:#e3e3e3"></div>
<div class="a" style="left:112.3px;top:378.5px;width:519.7px;height:17px;background:#fff"></div>
<div class="a" style="left:89.6px;width:60px;text-align:center;top:385.1px;height:9px;line-height:9px;font-size:7.2px;color:#333;font-family:'Liberation Serif',serif;color:#222">9</div>
<div class="a" style="left:135.6px;top:382.5px;height:9px;line-height:9px;font-size:7px;color:#111;">京</div>
<div class="a" style="left:142.3px;top:385.1px;height:9px;line-height:9px;font-size:6.6px;color:#333;font-family:'Liberation Serif',serif">G</div>
<div class="a" style="left:158.8px;top:385.1px;height:9px;line-height:9px;font-size:7.2px;color:#333;font-family:'Liberation Serif',serif">1</div>
<div class="a" style="left:197.8px;width:60px;text-align:center;top:385.1px;height:9px;line-height:9px;font-size:7.2px;color:#333;font-family:'Liberation Serif',serif;letter-spacing:0.2px;color:#222">11.12</div>
<div class="a" id="j61" style="left:254px;top:382.5px;width:13.6px;text-align:justify;text-align-last:justify;letter-spacing:-0.220px;height:9px;line-height:9px;font-size:7px;color:#111;">无效</div>
<div class="a" id="j62" style="left:278.7px;top:385.1px;width:63.2px;text-align:justify;text-align-last:justify;letter-spacing:0.102px;height:9px;line-height:9px;font-size:7.2px;color:#222;font-family:'Liberation Serif',serif">2014-08-29 08:45:08</div>
<div class="a" id="j63" style="left:343.2px;top:382.5px;width:117.4px;text-align:justify;text-align-last:justify;letter-spacing:-0.084px;height:9px;line-height:9px;font-size:7px;color:#111;">非法行驶报警(规则一:非工作时间行驶)</div>
<div class="a" style="left:461.5px;width:170.5px;overflow:hidden;top:382.5px;height:9px">
<div class="a" id="j64" style="left:0px;top:0px;width:172.4px;text-align:justify;text-align-last:justify;letter-spacing:-0.290px;height:9px;line-height:9px;font-size:7px;color:#111;">北京市通州区梨园北街、玉桥中路交汇处西南413米北京市</div>
</div>
<div class="a" style="left:112.3px;top:378.0px;width:519.7px;height:1px;background:#e3e3e3"></div>
<div class="a" style="left:112.3px;top:395.5px;width:519.7px;height:17px;background:#eef3fb"></div>
<div class="a" style="left:89.6px;width:60px;text-align:center;top:402.1px;height:9px;line-height:9px;font-size:7.2px;color:#333;font-family:'Liberation Serif',serif;color:#222">10</div>
<div class="a" style="left:135.6px;top:399.5px;height:9px;line-height:9px;font-size:7px;color:#111;">京</div>
<div class="a" style="left:142.3px;top:402.1px;height:9px;line-height:9px;font-size:6.6px;color:#333;font-family:'Liberation Serif',serif">F</div>
<div class="a" style="left:158.8px;top:402.1px;height:9px;line-height:9px;font-size:7.2px;color:#333;font-family:'Liberation Serif',serif">8</div>
<div class="a" style="left:197.8px;width:60px;text-align:center;top:402.1px;height:9px;line-height:9px;font-size:7.2px;color:#333;font-family:'Liberation Serif',serif;letter-spacing:0.2px;color:#222">5.56</div>
<div class="a" id="j65" style="left:254px;top:399.5px;width:13.6px;text-align:justify;text-align-last:justify;letter-spacing:-0.220px;height:9px;line-height:9px;font-size:7px;color:#111;">有效</div>
<div class="a" id="j66" style="left:278.7px;top:402.1px;width:63.2px;text-align:justify;text-align-last:justify;letter-spacing:0.102px;height:9px;line-height:9px;font-size:7.2px;color:#222;font-family:'Liberation Serif',serif">2014-08-29 08:42:01</div>
<div class="a" id="j67" style="left:343.2px;top:399.5px;width:117.4px;text-align:justify;text-align-last:justify;letter-spacing:-0.084px;height:9px;line-height:9px;font-size:7px;color:#111;">非法行驶报警(规则一:非工作时间行驶)</div>
<div class="a" style="left:461.5px;width:170.5px;overflow:hidden;top:399.5px;height:9px">
<div class="a" id="j68" style="left:0px;top:0px;width:172.4px;text-align:justify;text-align-last:justify;letter-spacing:-0.290px;height:9px;line-height:9px;font-size:7px;color:#111;">北京市通州区梨园北街、玉桥中路交汇处西南413米北京市</div>
</div>
<div class="a" style="left:112.3px;top:395.0px;width:519.7px;height:1px;background:#e3e3e3"></div>
<div class="a" style="left:112.3px;top:225.0px;width:501.7px;height:1px;background:#d8d8d8"></div>
<div class="a" style="left:126.8px;top:225.5px;width:1px;height:187px;background:#dedede"></div>
<div class="a" style="left:169.7px;top:225.5px;width:1px;height:187px;background:#dedede"></div>
<div class="a" style="left:212.9px;top:225.5px;width:1px;height:187px;background:#dedede"></div>
<div class="a" style="left:241.7px;top:225.5px;width:1px;height:187px;background:#dedede"></div>
<div class="a" style="left:277.7px;top:225.5px;width:1px;height:187px;background:#dedede"></div>
<div class="a" style="left:342.6px;top:225.5px;width:1px;height:187px;background:#dedede"></div>
<div class="a" style="left:460.9px;top:225.5px;width:1px;height:187px;background:#dedede"></div>
<div class="a" style="left:112.3px;top:412px;width:502px;height:1px;background:#d4d4d4"></div>
<div class="a" style="left:146.2px;top:243px;width:12.8px;height:165px;background:linear-gradient(90deg,#e6e6e6,#dcdcdc 45%,#d9d9d9 60%,#e4e4e4)"></div>
<div class="a" style="left:631px;top:40.5px;width:1px;height:402px;background:#d6d6d6"></div>
<div class="a" style="left:642px;top:38.5px;width:4px;height:404px;background:#f4f2ee"></div>
<div class="a" style="left:634.3px;top:40px;width:7.7px;height:367.5px;background:linear-gradient(90deg,#d9e1fb,#e6ebfd 60%,#dde4fb);border-left:1px solid #c3cff3;border-right:1px solid #c3cff3;border-bottom:1px solid #b0c0ee"></div>
<div class="a" style="left:634.3px;top:40px;width:7.7px;height:8.5px;background:#eef2fd;border-bottom:1px solid #a9bbef"></div>
<div class="a" style="left:637px;top:226.5px;width:3.2px;height:0.8px;background:#8da3dc"></div>
<div class="a" style="left:637px;top:228.5px;width:3.2px;height:0.8px;background:#8da3dc"></div>
<div class="a" style="left:637px;top:230.5px;width:3.2px;height:0.8px;background:#8da3dc"></div>
<svg class="a" style="left:636.5px;top:42.3px" width="5" height="3" viewBox="0 0 5 3"><path d="M0 3H5L2.5 0Z" fill="#23408f"/></svg>
<div class="a" style="left:635px;top:290px;width:7px;height:30px;overflow:hidden"><div class="a" style="left:1px;top:3px;width:23.6px;height:23.6px;border-radius:50%;background:#2fb54a;box-shadow:0 0 0 1px #c9cfd8"></div><div class="a" style="left:4px;top:12px;width:2px;height:4px;background:#fff;border-radius:1px"></div></div>
<div class="a" id="j69" style="left:407.6px;top:418.5px;width:70.3px;text-align:justify;text-align-last:justify;letter-spacing:1.307px;height:9px;line-height:9px;font-size:7.4px;color:#e00000;font-weight:bold;-webkit-text-stroke:0.15px #e00000">(第:1页),(共:1页)</div>
<div class="a" style="left:480.2px;top:417.2px;width:22.5px;height:10.8px;background:linear-gradient(#f47a38,#e5531c)"></div>
<div class="a" style="left:480.2px;width:22.5px;text-align:center;top:418px;height:9px;line-height:9px;font-size:7px;color:#fff;font-weight:bold">首页</div>
<div class="a" style="left:504.6px;top:417.2px;width:33.5px;height:10.8px;background:#c4c4c4"></div>
<div class="a" style="left:504.6px;width:33.5px;text-align:center;top:418px;height:9px;line-height:9px;font-size:7px;color:#f4f4f4;font-weight:bold">&lt;上一页</div>
<div class="a" style="left:540px;top:417.2px;width:12px;height:10.8px;background:#fff;border:1px solid #ddd"></div>
<div class="a" style="left:544.3px;top:418.8px;height:9px;line-height:9px;font-size:6px;color:#222;font-weight:bold;-webkit-text-stroke:0.15px #222">1</div>
<div class="a" style="left:553.9px;top:417.2px;width:33.5px;height:10.8px;background:#c4c4c4"></div>
<div class="a" style="left:553.9px;width:33.5px;text-align:center;top:418px;height:9px;line-height:9px;font-size:7px;color:#f4f4f4;font-weight:bold">下一页&gt;</div>
<div class="a" style="left:589.6px;top:417.2px;width:23px;height:10.8px;background:linear-gradient(#f47a38,#e5531c)"></div>
<div class="a" style="left:589.6px;width:23px;text-align:center;top:418px;height:9px;line-height:9px;font-size:7px;color:#fff;font-weight:bold">尾页</div></body></html>
